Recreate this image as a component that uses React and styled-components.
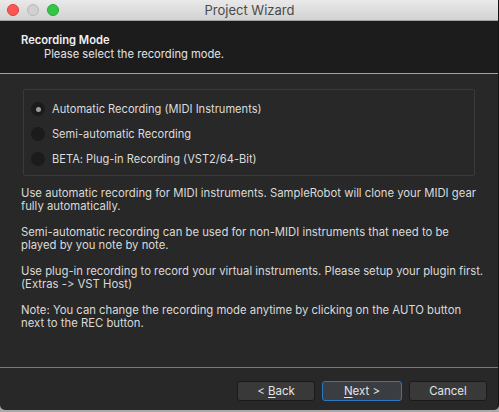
import React, { useState } from "react";
import styled, { createGlobalStyle } from "styled-components";

const GlobalStyle = createGlobalStyle`
  html, body {
    margin: 0;
    padding: 0;
    background: #a9a9a9;
  }
  body {
    font-family: Inter, "Liberation Sans", sans-serif;
    font-feature-settings: "calt" 0, "liga" 0;
    -webkit-font-smoothing: antialiased;
  }
`;

const modes = [
  "Automatic Recording (MIDI Instruments)",
  "Semi-automatic Recording",
  "BETA: Plug-in Recording (VST2/64-Bit)",
];

// each entry is one paragraph, split at the same places as the original dialog
const notes = [
  ["Use automatic recording for MIDI instruments. SampleRobot will clone your MIDI gear", "fully automatically."],
  ["Semi-automatic recording can be used for non-MIDI instruments that need to be", "played by you note by note."],
  ["Use plug-in recording to record your virtual instruments. Please setup your plugin first.", "(Extras -> VST Host)"],
  ["Note: You can change the recording mode anytime by clicking on the AUTO button", "next to the REC button."],
];

const App = () => {
  const [mode, setMode] = useState(0);

  return (
    <>
      <GlobalStyle />
      <Window>
        <TitleBar>
          <Lights>
            <Light color="#fc5753" edge="#df3d3a" />
            <Light color="#d0d0d0" edge="#b8b8b8" />
            <Light color="#33c748" edge="#27a83a" />
          </Lights>
          <Title>Project Wizard</Title>
        </TitleBar>

        <Header>
          <HeaderTitle>Recording Mode</HeaderTitle>
          <HeaderSub>Please select the recording mode.</HeaderSub>
        </Header>

        <Body>
          <GroupBox>
            {modes.map((label, i) => (
              <RadioRow key={label} onClick={() => setMode(i)}>
                <Radio>{mode === i && <Dot />}</Radio>
                <RadioLabel>{label}</RadioLabel>
              </RadioRow>
            ))}
          </GroupBox>

          {notes.map((lines) => (
            <Text key={lines[0]}>
              {lines.map((line) => (
                <Line key={line}>{line}</Line>
              ))}
            </Text>
          ))}
        </Body>

        <Footer>
          <Button>
            &lt; <u>B</u>ack
          </Button>
          <Button primary>
            <u>N</u>ext &gt;
          </Button>
          <Button>Cancel</Button>
        </Footer>
      </Window>
    </>
  );
};

const Window = styled.div`
  width: 498px;
  height: 410px;
  display: flex;
  flex-direction: column;
  background: #282828;
  border-right: 1px solid #141414;
  border-radius: 0 0 5px 5px;
  overflow: hidden;
`;

const TitleBar = styled.div`
  position: relative;
  height: 20px;
  flex-shrink: 0;
  display: flex;
  align-items: center;
  justify-content: center;
  background: linear-gradient(#e9e9e9, #d2d2d2);
  border-bottom: 1px solid #a0a0a0;
`;

const Lights = styled.div`
  position: absolute;
  left: 7px;
  top: 4px;
  display: flex;
  gap: 8px;
`;

const Light = styled.span`
  width: 12px;
  height: 12px;
  border-radius: 50%;
  box-sizing: border-box;
  background: ${({ color }) => color};
  border: 0.5px solid ${({ edge }) => edge};
`;

const Title = styled.div`
  font-size: 13px;
  color: #4a4a4a;
  margin-left: 1px;
`;

const Header = styled.div`
  height: 53px;
  flex-shrink: 0;
  box-sizing: border-box;
  background: #1c1c1c;
  border-bottom: 1px solid #a3a3a3;
  padding: 12px 0 0 21px;
`;

const HeaderTitle = styled.div`
  font-size: 11.2px;
  font-weight: 600;
  color: #f0f0f0;
  line-height: 14px;
`;

const HeaderSub = styled.div`
  font-size: 11.2px;
  color: #e2e2e2;
  line-height: 14px;
  padding-left: 23px;
`;

const Body = styled.div`
  flex: 1;
  padding: 15px 21px 0;
  display: flex;
  flex-direction: column;
  gap: 13px;
`;

const GroupBox = styled.div`
  margin: 0 0 -2px 2px;
  width: 452px;
  height: 87px;
  box-sizing: border-box;
  border: 1px solid #3a3a3a;
  border-radius: 2px;
  padding: 12px 0 0 7px;
  display: flex;
  flex-direction: column;
  gap: 11px;
`;

const RadioRow = styled.div`
  display: flex;
  align-items: center;
  gap: 7px;
  height: 14px;
  cursor: default;
`;

const Radio = styled.span`
  width: 14px;
  height: 14px;
  border-radius: 50%;
  background: #1b1b1b;
  display: flex;
  align-items: center;
  justify-content: center;
`;

const Dot = styled.span`
  width: 5px;
  height: 5px;
  border-radius: 50%;
  background: #9c9c9c;
`;

const RadioLabel = styled.span`
  font-size: 11.1px;
  color: #dcdcdc;
`;

const Text = styled.p`
  margin: 0;
  font-size: 11.3px;
  line-height: 13px;
  color: #dadada;
`;

const Line = styled.span`
  display: block;
  white-space: nowrap;
`;

const Footer = styled.div`
  height: 43px;
  flex-shrink: 0;
  box-sizing: border-box;
  border-top: 1px solid #7a7a7a;
  display: flex;
  justify-content: flex-end;
  align-items: flex-start;
  gap: 7px;
  padding: 13px 11px 0 0;
`;

const Button = styled.button`
  width: ${({ primary }) => (primary ? "80px" : "78px")};
  height: 20px;
  box-sizing: border-box;
  border-radius: 3px;
  border: 1px solid ${({ primary }) => (primary ? "#2b78c2" : "#1a1a1a")};
  background: ${({ primary }) => (primary ? "#3a3d42" : "#393939")};
  color: #e4e4e4;
  font-family: inherit;
  font-size: 11.5px;
  padding: 0;
  cursor: default;

  u {
    text-decoration-thickness: 1px;
    text-underline-offset: 2px;
  }
`;

export default App;
